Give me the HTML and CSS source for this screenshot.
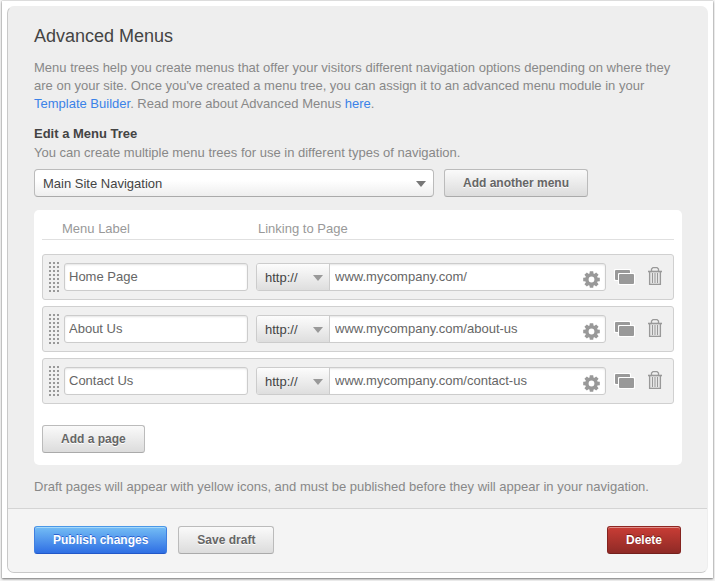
FILE: index.html
```
<!DOCTYPE html>
<html lang="en">
<head>
    <meta charset="UTF-8">
    <meta name="viewport" content="width=device-width, initial-scale=1.0">
    <title>Advanced Menus</title>
    <link rel="stylesheet" href="styles.css">
</head>
<body>
    <!-- Shared icons -->
    <svg class="sprite" width="0" height="0" aria-hidden="true">
        <symbol id="icon-gear" viewBox="0 0 17 17">
            <g fill="#999">
                <path fill-rule="evenodd" d="M8.5 2.2a6.3 6.3 0 1 0 0 12.6a6.3 6.3 0 1 0 0-12.6zM8.5 5.6a2.9 2.9 0 1 1 0 5.8a2.9 2.9 0 1 1 0-5.8z"/>
                <path id="tooth" d="M6.4 3.6L6.8 0.2h3.4l0.4 3.4z"/>
                <use href="#tooth" transform="rotate(45 8.5 8.5)"/>
                <use href="#tooth" transform="rotate(90 8.5 8.5)"/>
                <use href="#tooth" transform="rotate(135 8.5 8.5)"/>
                <use href="#tooth" transform="rotate(180 8.5 8.5)"/>
                <use href="#tooth" transform="rotate(225 8.5 8.5)"/>
                <use href="#tooth" transform="rotate(270 8.5 8.5)"/>
                <use href="#tooth" transform="rotate(315 8.5 8.5)"/>
            </g>
        </symbol>
        <symbol id="icon-pages" viewBox="0 0 21 16">
            <rect x="0" y="0" width="17" height="12" rx="1" fill="#fff"/>
            <rect x="1" y="1" width="15" height="10" rx="1" fill="#999"/>
            <rect x="4" y="4" width="17" height="12" rx="1" fill="#fff"/>
            <rect x="5" y="5" width="15" height="10" rx="1" fill="#999"/>
        </symbol>
        <symbol id="icon-trash" viewBox="0 0 14 18">
            <rect x="2" y="5" width="10" height="12" fill="#e6e6e6"/>
            <g fill="none" stroke="#999">
                <path d="M3.5 4V2L5 0.6h4L10.5 2v2" stroke-width="1.3"/>
                <path d="M0 4.5h14" stroke-width="1.6"/>
                <path d="M1.6 4.5v13h10.8v-13" stroke-width="1.3"/>
                <path d="M4.5 6v10M7 6v10M9.5 6v10"/>
            </g>
        </symbol>
    </svg>

    <div class="frame">
        <form class="card">
            <div class="content">
                <h1>Advanced Menus</h1>
                <p>Menu trees help you create menus that offer your visitors different navigation options depending on where they are on your site. Once you've created a menu tree, you can assign it to an advanced menu module in your <a href="#">Template Builder</a>. Read more about Advanced Menus <a href="#">here</a>.</p>

                <h2><label for="menuTree">Edit a Menu Tree</label></h2>
                <p>You can create multiple menu trees for use in different types of navigation.</p>

                <div class="picker">
                    <div class="select-box">
                        <select id="menuTree">
                            <option>Main Site Navigation</option>
                        </select>
                    </div>
                    <button type="button" class="button">Add another menu</button>
                </div>

                <div class="panel">
                    <div class="panel-head">
                        <span id="colLabel">Menu Label</span>
                        <span id="colLink">Linking to Page</span>
                    </div>

                    <div class="row">
                        <span class="grip"></span>
                        <div class="fields">
                            <input type="text" class="field" aria-labelledby="colLabel" value="Home Page">
                            <div class="link-box">
                                <div class="scheme">
                                    <select aria-label="Protocol"><option>http://</option></select>
                                </div>
                                <input type="text" aria-labelledby="colLink" value="www.mycompany.com/">
                                <button type="button" class="icon gear" aria-label="Settings"><svg width="17" height="17"><use href="#icon-gear"/></svg></button>
                            </div>
                        </div>
                        <button type="button" class="icon" aria-label="Duplicate"><svg width="21" height="16"><use href="#icon-pages"/></svg></button>
                        <button type="button" class="icon trash" aria-label="Remove"><svg width="14" height="18"><use href="#icon-trash"/></svg></button>
                    </div>

                    <div class="row">
                        <span class="grip"></span>
                        <div class="fields">
                            <input type="text" class="field" aria-labelledby="colLabel" value="About Us">
                            <div class="link-box">
                                <div class="scheme">
                                    <select aria-label="Protocol"><option>http://</option></select>
                                </div>
                                <input type="text" aria-labelledby="colLink" value="www.mycompany.com/about-us">
                                <button type="button" class="icon gear" aria-label="Settings"><svg width="17" height="17"><use href="#icon-gear"/></svg></button>
                            </div>
                        </div>
                        <button type="button" class="icon" aria-label="Duplicate"><svg width="21" height="16"><use href="#icon-pages"/></svg></button>
                        <button type="button" class="icon trash" aria-label="Remove"><svg width="14" height="18"><use href="#icon-trash"/></svg></button>
                    </div>

                    <div class="row">
                        <span class="grip"></span>
                        <div class="fields">
                            <input type="text" class="field" aria-labelledby="colLabel" value="Contact Us">
                            <div class="link-box">
                                <div class="scheme">
                                    <select aria-label="Protocol"><option>http://</option></select>
                                </div>
                                <input type="text" aria-labelledby="colLink" value="www.mycompany.com/contact-us">
                                <button type="button" class="icon gear" aria-label="Settings"><svg width="17" height="17"><use href="#icon-gear"/></svg></button>
                            </div>
                        </div>
                        <button type="button" class="icon" aria-label="Duplicate"><svg width="21" height="16"><use href="#icon-pages"/></svg></button>
                        <button type="button" class="icon trash" aria-label="Remove"><svg width="14" height="18"><use href="#icon-trash"/></svg></button>
                    </div>

                    <button type="button" class="button add-page">Add a page</button>
                </div>

                <p>Draft pages will appear with yellow icons, and must be published before they will appear in your navigation.</p>
            </div>

            <div class="footer">
                <button type="submit" class="button publish">Publish changes</button>
                <button type="button" class="button">Save draft</button>
                <button type="button" class="button delete">Delete</button>
            </div>
        </form>
    </div>
</body>
</html>
```
FILE: styles.css
```
* {
    box-sizing: border-box;
}

body {
    margin: 0;
    padding: 1px 2px 3px;
    background: #f4f4f4;
    font-family: "Liberation Sans", Arial, sans-serif;
    font-size: 13px;
    line-height: 18px;
    color: #888;
}

h1, h2, p {
    margin: 0;
}

a {
    color: #3b82e8;
    text-decoration: none;
}

.sprite {
    position: absolute;
}

.frame {
    padding: 5px;
    background: #fff;
    box-shadow: 0 1px 2px #777, 0 0 1px #999;
}

.card {
    border: 1px solid #c8c8c8;
    border-top-color: #eee;
    border-right-color: #eee;
    border-radius: 7px;
    background: #eee;
    overflow: hidden;
}

.content {
    padding: 17px 25px 12px 26px;
}

h1 {
    margin-bottom: 11px;
    font-size: 18px;
    font-weight: normal;
    line-height: 24px;
    color: #444;
}

h2 {
    margin: 12px 0 1px;
    font-size: 13px;
    line-height: 18px;
    color: #444;
}

/* Buttons */
.button {
    height: 28px;
    padding: 0 18px;
    border: 1px solid #bbb;
    border-bottom-color: #aaa;
    border-radius: 3px;
    background: linear-gradient(#fafafa, #dcdcdc);
    font: bold 12px "Liberation Sans", Arial, sans-serif;
    color: #666;
    text-shadow: 0 1px 0 #fff;
    white-space: nowrap;
    cursor: pointer;
}

.publish {
    border-color: #4a98e8 #3f7fe0 #2258c8;
    background: linear-gradient(#74bdf5, #2f6fe4);
    box-shadow: inset 0 1px 0 #a5d8fa;
    color: #fff;
    text-shadow: 0 -1px 0 #2a62d0;
}

.delete {
    margin-left: auto;
    border-color: #8e2722 #84231f #74201c;
    background: linear-gradient(#c93d35, #8f2a26);
    box-shadow: inset 0 1px 0 #df8f8a;
    color: #fff;
    text-shadow: 0 -1px 0 #7a1f1b;
}

/* Drop-downs */
select, input {
    font: 13px "Liberation Sans", Arial, sans-serif;
    color: #666;
}

select {
    appearance: none;
    width: 100%;
    height: 100%;
    padding: 0 8px;
    border: 0;
    background: transparent;
    color: #444;
}

.select-box, .scheme {
    position: relative;
}

.select-box::after, .scheme::after {
    content: "";
    position: absolute;
    top: 11px;
    right: 7px;
    border: 5px solid transparent;
    border-top: 6px solid #777;
    border-bottom: 0;
    pointer-events: none;
}

.picker {
    display: flex;
    gap: 10px;
    margin-top: 7px;
}

.select-box {
    flex: 0 1 400px;
    height: 28px;
    border: 1px solid #bbb;
    border-bottom-color: #aaa;
    border-radius: 4px;
    background: linear-gradient(#fff 40%, #eee);
}

/* Menu items */
.panel {
    margin: 13px 0;
    padding: 8px 8px 12px;
    border-radius: 5px;
    background: #fff;
}

.panel-head {
    display: grid;
    grid-template-columns: 184fr 350fr;
    gap: 12px;
    margin-bottom: 14px;
    padding: 2px 66px 1px 20px;
    border-bottom: 1px solid #e0e0e0;
    color: #999;
}

.row {
    display: flex;
    align-items: center;
    height: 46px;
    margin-bottom: 6px;
    padding: 0 11px 0 6px;
    border: 1px solid #d0d0d0;
    border-radius: 3px;
    background: #f0f0f0;
}

.grip {
    width: 10px;
    height: 30px;
    margin-right: 5px;
    background: conic-gradient(transparent 75%, #999 0) 0 0 / 4px 4px;
    cursor: move;
}

.fields {
    flex: 1;
    display: grid;
    grid-template-columns: 184fr 350fr;
    gap: 8px;
    margin-right: 8px;
}

.field, .link-box {
    width: 100%;
    min-width: 0;
    height: 28px;
    border: 1px solid #ccc;
    border-radius: 3px;
    background: #fff;
    box-shadow: inset 0 1px 2px #e4e4e4;
}

.field {
    padding: 0 4px 2px;
}

.link-box {
    display: flex;
    align-items: center;
}

.link-box input {
    flex: 1;
    min-width: 0;
    height: 26px;
    padding: 0 5px 2px;
    border: 0;
    background: transparent;
}

.scheme {
    width: 73px;
    height: 26px;
    border-right: 1px solid #ccc;
    border-radius: 2px 0 0 2px;
    background: linear-gradient(#fcfcfc, #dedede);
}

.scheme::after {
    right: 6px;
    border-top-color: #999;
}

.icon {
    padding: 0;
    border: 0;
    background: none;
    cursor: pointer;
}

.icon svg {
    display: block;
}

.gear {
    padding-top: 5px;
    margin-right: 5px;
}

.trash {
    margin-left: 13px;
    padding-bottom: 2px;
}

.add-page {
    margin-top: 15px;
}

.footer {
    display: flex;
    gap: 11px;
    padding: 17px 26px 18px;
    border-top: 1px solid #d4d4d4;
    background: #f4f4f4;
}
```
